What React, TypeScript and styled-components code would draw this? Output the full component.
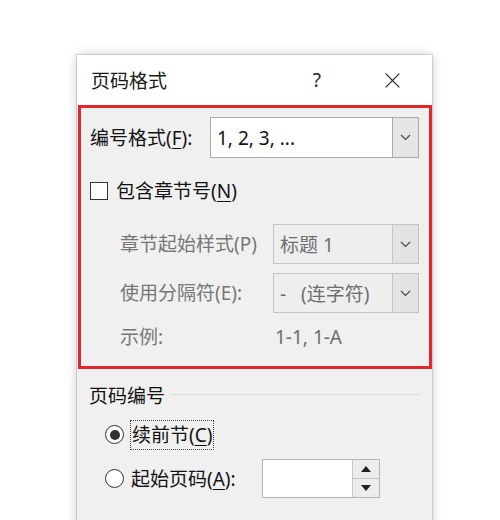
import React from 'react';
import styled, { createGlobalStyle } from 'styled-components';

const GlobalStyle = createGlobalStyle`
  html, body {
    margin: 0;
    padding: 0;
    background: #ffffff;
  }
  body {
    font-family: "Noto Sans", "Noto Sans CJK SC", sans-serif;
    color: #111;
  }
`;

const colors = {
  red: '#e1262c',
  body: '#f0f0f0',
  text: '#121212',
  muted: '#767676',
  border: '#a9a9a9',
  mutedBorder: '#c4c4c4',
};

const App = () => {
  return (
    <Page>
      <GlobalStyle />
      <Dialog>
        <TitleBar>
          <Title>页码格式</Title>
          <TitleButtons>
            <HelpMark>?</HelpMark>
            <CloseIcon viewBox="0 0 20 20">
              <path d="M2 2 L18 18 M18 2 L2 18" stroke="#222" strokeWidth="1.4" fill="none" />
            </CloseIcon>
          </TitleButtons>
        </TitleBar>

        <Highlight>
          <FormatRow>
            <Label>编号格式(<Key>F</Key>):</Label>
            <Combo width={209} value="1, 2, 3, ..." />
          </FormatRow>

          <CheckRow>
            <CheckBox />
            <Label>包含章节号(<Key>N</Key>)</Label>
          </CheckRow>

          <SubGrid>
            <Label muted>章节起始样式(P)</Label>
            <Combo width={146} value="标题 1" disabled />
            <Label muted>使用分隔符(E):</Label>
            <Combo width={146} value="-   (连字符)" disabled />
            <Label muted>示例:</Label>
            <ExampleValue>1-1, 1-A</ExampleValue>
          </SubGrid>
        </Highlight>

        <Section>
          <GroupHeader>
            <Label>页码编号</Label>
            <GroupLine />
          </GroupHeader>
          <RadioRow>
            <Radio checked />
            <FocusLabel>续前节(<Key>C</Key>)</FocusLabel>
          </RadioRow>
          <RadioRow>
            <Radio />
            <Label>起始页码(<Key>A</Key>):</Label>
            <Spin>
              <SpinInput />
              <SpinButtons>
                <SpinButton>
                  <svg width="10" height="6" viewBox="0 0 10 6"><path d="M0 6 L5 0 L10 6 Z" fill="#222" /></svg>
                </SpinButton>
                <SpinButton>
                  <svg width="10" height="6" viewBox="0 0 10 6"><path d="M0 0 L5 6 L10 0 Z" fill="#222" /></svg>
                </SpinButton>
              </SpinButtons>
            </Spin>
          </RadioRow>
        </Section>
      </Dialog>
    </Page>
  );
};

export default App;

const Combo = ({ width, value, disabled }: { width: number; value: string; disabled?: boolean }) => (
  <ComboBox width={width} disabled={disabled}>
    <ComboText disabled={disabled}>{value}</ComboText>
    <ComboButton disabled={disabled}>
      <svg width="11" height="7" viewBox="0 0 11 7">
        <path d="M1 1 L5.5 5.5 L10 1" stroke="#444" strokeWidth="1.1" fill="none" />
      </svg>
    </ComboButton>
  </ComboBox>
);

const Page = styled.div`
  width: 500px;
  height: 520px;
  overflow: hidden;
  padding: 55px 0 0 77px;
  box-sizing: border-box;
`;

const Dialog = styled.div`
  width: 355px;
  height: 480px;
  background: ${colors.body};
  box-shadow: 0 0 10px rgba(0, 0, 0, 0.22), 0 0 0 1px rgba(0, 0, 0, 0.12);
  display: flex;
  flex-direction: column;
`;

const TitleBar = styled.div`
  height: 50px;
  background: #ffffff;
  display: flex;
  align-items: center;
  padding-left: 14px;
`;

const Title = styled.div`
  font-size: 19px;
  color: #1a1a1a;
  flex: 1;
`;

const TitleButtons = styled.div`
  display: flex;
  align-items: center;
  gap: 63px;
  padding-right: 31px;
`;

const HelpMark = styled.span`
  font-size: 19px;
  color: #222;
`;

const CloseIcon = styled.svg`
  width: 17px;
  height: 17px;
`;

const Highlight = styled.div`
  border: 3px solid ${colors.red};
  margin-left: 1px;
  height: 264px;
  box-sizing: border-box;
  padding: 9px 10px 0 9px;
  display: flex;
  flex-direction: column;
`;

const Label = styled.span<{ muted?: boolean }>`
  font-size: 19px;
  line-height: 26px;
  color: ${(p) => (p.muted ? colors.muted : colors.text)};
  white-space: nowrap;
`;

const Key = styled.span`
  text-decoration: underline;
  text-underline-offset: 3px;
`;

const FormatRow = styled.div`
  display: flex;
  align-items: center;
  justify-content: space-between;
  height: 41px;
`;

const ComboBox = styled.div<{ width: number; disabled?: boolean }>`
  width: ${(p) => p.width}px;
  height: 100%;
  min-height: 40px;
  box-sizing: border-box;
  border: 1px solid ${(p) => (p.disabled ? colors.mutedBorder : colors.border)};
  background: ${(p) => (p.disabled ? '#eeeeee' : '#ffffff')};
  display: flex;
  align-items: stretch;
`;

const ComboText = styled.div<{ disabled?: boolean }>`
  flex: 1;
  display: flex;
  align-items: center;
  padding-left: 6px;
  font-size: 19px;
  white-space: pre;
  color: ${(p) => (p.disabled ? '#6e6e6e' : colors.text)};
`;

const ComboButton = styled.div<{ disabled?: boolean }>`
  width: 26px;
  box-sizing: border-box;
  border-left: 1px solid ${(p) => (p.disabled ? colors.mutedBorder : colors.border)};
  background: ${(p) => (p.disabled ? '#e3e3e3' : '#e6e6e6')};
  display: flex;
  align-items: center;
  justify-content: center;
`;

const CheckRow = styled.div`
  display: flex;
  align-items: center;
  gap: 8px;
  height: 30px;
  margin-top: 18px;
`;

const CheckBox = styled.div`
  width: 18px;
  height: 18px;
  box-sizing: border-box;
  border: 1.5px solid #333;
  background: #fff;
`;

const SubGrid = styled.div`
  display: grid;
  grid-template-columns: 153px 146px;
  grid-template-rows: 40px 40px 30px;
  row-gap: 9px;
  align-items: center;
  margin-top: 18px;
  padding-left: 30px;
`;

const ExampleValue = styled.span`
  font-size: 19px;
  color: #6e6e6e;
  padding-left: 2px;
`;

const Section = styled.div`
  padding: 13px 12px 0 12px;
  display: flex;
  flex-direction: column;
`;

const GroupHeader = styled.div`
  display: flex;
  align-items: center;
  gap: 6px;
  height: 28px;
`;

const GroupLine = styled.div`
  flex: 1;
  height: 1px;
  margin-top: -3px;
  background: #dcdcdc;
`;

const RadioRow = styled.div`
  display: flex;
  align-items: center;
  gap: 7px;
  height: 39px;
  padding-left: 16px;
  margin-top: 5px;
`;

const Radio = styled.div<{ checked?: boolean }>`
  width: 19px;
  height: 19px;
  border-radius: 50%;
  box-sizing: border-box;
  border: 1.6px solid #333;
  background: #fff;
  display: flex;
  align-items: center;
  justify-content: center;
  &::after {
    content: '';
    display: ${(p) => (p.checked ? 'block' : 'none')};
    width: 10px;
    height: 10px;
    border-radius: 50%;
    background: #333;
  }
`;

const FocusLabel = styled(Label)`
  outline: 1px dotted #444;
  padding: 1px 1px;
`;

const Spin = styled.div`
  display: flex;
  width: 118px;
  height: 39px;
  margin-left: 19px;
  border: 1px solid #b5b5b5;
  box-sizing: border-box;
  background: #fff;
`;

const SpinInput = styled.div`
  flex: 1;
`;

const SpinButtons = styled.div`
  width: 26px;
  display: flex;
  flex-direction: column;
  border-left: 1px solid #c8c8c8;
`;

const SpinButton = styled.div`
  flex: 1;
  background: #ececec;
  display: flex;
  align-items: center;
  justify-content: center;
  & + & {
    border-top: 1px solid #c8c8c8;
  }
`;
